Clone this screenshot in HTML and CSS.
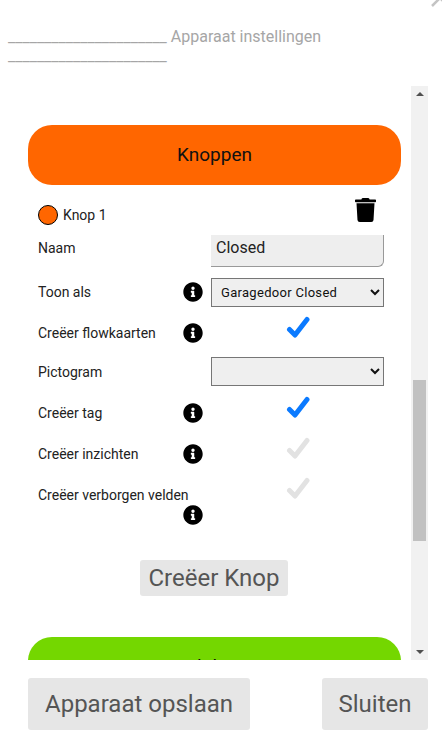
FILE: index.html
```html
<!DOCTYPE html>
<html lang="nl">
<head>
    <meta charset="UTF-8">
    <meta name="viewport" content="width=device-width, initial-scale=1.0">
    <title>Apparaat instellingen</title>
    <link rel="stylesheet" href="styles.css">
</head>
<body>
    <svg class="close-icon" viewBox="0 0 20 20"><path d="M4 16L20 0M4 0L20 16"/></svg>

    <h1 class="page-title">______________________ Apparaat instellingen ______________________</h1>

    <div class="pane">
        <div class="pane-content">
            <div class="section-head orange">Knoppen</div>

            <div class="item-head">
                <span class="dot"></span>
                <span class="item-name">Knop 1</span>
                <svg class="trash" viewBox="0 0 448 512"><path d="M432 32H312l-9.400-18.700A24 24 0 0 0 281.100 0H166.800a23.720 23.720 0 0 0-21.400 13.300L136 32H16A16 16 0 0 0 0 48v24a16 16 0 0 0 16 16h416a16 16 0 0 0 16-16V48a16 16 0 0 0-16-16zM53.200 467a48 48 0 0 0 47.900 45h245.800a48 48 0 0 0 47.900-45L416 112H32z"/></svg>
            </div>

            <div class="row row-name">
                <div class="label-cell"><span>Naam</span></div>
                <input class="text-input" type="text" value="Closed">
            </div>

            <div class="row row-show">
                <div class="label-cell">
                    <span>Toon als</span>
                    <svg class="info" viewBox="0 0 512 512"><use href="#info-shape"/></svg>
                </div>
                <select class="select-input"><option>Garagedoor Closed</option></select>
            </div>

            <div class="row row-flow">
                <div class="label-cell">
                    <span>Creëer flowkaarten</span>
                    <svg class="info" viewBox="0 0 512 512"><use href="#info-shape"/></svg>
                </div>
                <div class="check-cell"><svg class="check on" viewBox="0 0 24 24"><use href="#check-shape"/></svg></div>
            </div>

            <div class="row row-picto">
                <div class="label-cell"><span>Pictogram</span></div>
                <select class="select-input"><option></option></select>
            </div>

            <div class="row row-tag">
                <div class="label-cell">
                    <span>Creëer tag</span>
                    <svg class="info" viewBox="0 0 512 512"><use href="#info-shape"/></svg>
                </div>
                <div class="check-cell"><svg class="check on" viewBox="0 0 24 24"><use href="#check-shape"/></svg></div>
            </div>

            <div class="row row-insights">
                <div class="label-cell">
                    <span>Creëer inzichten</span>
                    <svg class="info" viewBox="0 0 512 512"><use href="#info-shape"/></svg>
                </div>
                <div class="check-cell"><svg class="check" viewBox="0 0 24 24"><use href="#check-shape"/></svg></div>
            </div>

            <div class="row row-hidden">
                <div class="label-cell">
                    <span>Creëer verborgen velden</span>
                    <svg class="info" viewBox="0 0 512 512"><use href="#info-shape"/></svg>
                </div>
                <div class="check-cell"><svg class="check" viewBox="0 0 24 24"><use href="#check-shape"/></svg></div>
            </div>

            <div class="create-wrap"><button class="btn btn-create">Creëer Knop</button></div>

            <div class="section-head green">Sliders</div>
        </div>

        <div class="scrollbar">
            <span class="arrow up"></span>
            <span class="thumb"></span>
            <span class="arrow down"></span>
        </div>
    </div>

    <div class="footer">
        <button class="btn btn-large btn-save">Apparaat opslaan</button>
        <button class="btn btn-large btn-close">Sluiten</button>
    </div>

    <svg class="defs" width="0" height="0">
        <defs>
            <path id="info-shape" d="M256 8C119.043 8 8 119.083 8 256c0 136.997 111.043 248 248 248s248-111.003 248-248C504 119.083 392.957 8 256 8zm0 110c23.196 0 42 18.804 42 42s-18.804 42-42 42-42-18.804-42-42 18.804-42 42-42zm56 254c0 6.627-5.373 12-12 12h-88c-6.627 0-12-5.373-12-12v-24c0-6.627 5.373-12 12-12h12v-64h-12c-6.627 0-12-5.373-12-12v-24c0-6.627 5.373-12 12-12h64c6.627 0 12 5.373 12 12v100h12c6.627 0 12 5.373 12 12v24z"/>
            <path id="check-shape" d="M3.500 13.500L9 19L21 3.500" fill="none" stroke-width="5" stroke-linecap="round" stroke-linejoin="round"/>
        </defs>
    </svg>
</body>
</html>
```

FILE: styles.css
```css
html, body {
    height: 100%;
}
body {
    margin: 0;
    font-family: Roboto, sans-serif;
    background-color: #ffffff;
    color: #222222;
    overflow: hidden;
    position: relative;
}
.defs {
    position: absolute;
}
.close-icon {
    position: absolute;
    top: -10px;
    right: -6px;
    width: 20px;
    height: 20px;
    fill: none;
    stroke: #c4c4c4;
    stroke-width: 2.500;
}
.page-title {
    margin: 0;
    height: 86px;
    padding: 27px 40px 0 8px;
    box-sizing: border-box;
    font-size: 16px;
    font-weight: 400;
    line-height: 19px;
    color: #a6a6a6;
}
.pane {
    display: flex;
    width: 428px;
    height: 574px;
    overflow: hidden;
}
.pane-content {
    width: 373px;
    margin: 0 10px 0 28px;
    padding-top: 39px;
    overflow: hidden;
}
.section-head {
    height: 60px;
    border-radius: 24px;
    font-size: 19px;
    line-height: 60px;
    text-align: center;
    color: #111111;
}
.orange {
    background: #ff6600;
}
.green {
    background: #74d700;
}
.item-head {
    display: flex;
    align-items: center;
    height: 50px;
    padding-left: 10px;
    font-size: 14px;
}
.dot {
    width: 18px;
    height: 18px;
    border: 1px solid #000000;
    border-radius: 50%;
    background: #ff6600;
    margin-top: 9px;
}
.item-name {
    margin-left: 5px;
    margin-top: 9px;
}
.trash {
    width: 21px;
    height: 24px;
    margin-left: auto;
    margin-right: 25px;
    margin-top: -1px;
}
.row {
    display: flex;
    align-items: flex-start;
    padding-left: 10px;
    font-size: 14px;
}
.label-cell {
    display: flex;
    flex-wrap: wrap;
    align-items: center;
    width: 165px;
    margin-right: 8px;
    line-height: 20px;
}
.info {
    width: 20px;
    height: 20px;
    margin-left: auto;
}
.text-input {
    width: 173px;
    height: 32px;
    box-sizing: border-box;
    padding: 0 5px 6px;
    border: 0;
    border-right: 1px solid #999999;
    border-bottom: 1px solid #999999;
    border-bottom-right-radius: 6px;
    background: #eeeeee;
    font-family: Roboto, sans-serif;
    font-size: 16px;
    color: #222222;
}
.select-input {
    width: 173px;
    height: 29px;
    border: 1px solid #767676;
    border-radius: 0;
    background-color: #efefef;
    padding-left: 5px;
    font-family: Roboto, sans-serif;
    font-size: 13px;
    letter-spacing: 0.3px;
    color: #111111;
}
.check-cell {
    width: 173px;
    margin-top: -2px;
    display: flex;
    justify-content: center;
}
.check {
    width: 24px;
    height: 24px;
    stroke: #e2e2e2;
}
.check.on {
    stroke: #0b7aff;
}
.row-name {
    height: 43px;
}
.row-name .label-cell {
    padding-top: 3px;
}
.row-show {
    height: 39px;
}
.row-show .label-cell {
    padding-top: 4px;
}
.row-flow {
    height: 40px;
}
.row-flow .label-cell {
    padding-top: 6px;
}
.row-flow .check-cell {
    margin-top: -1px;
}
.row-picto {
    height: 41px;
}
.row-picto .label-cell, .row-tag .label-cell, .row-insights .label-cell, .row-hidden .label-cell {
    padding-top: 5px;
}
.row-tag {
    height: 41px;
}
.row-insights {
    height: 41px;
}
.row-hidden {
    height: 80px;
}
.row-hidden .check-cell {
    margin-top: -3px;
}
.create-wrap {
    display: flex;
    justify-content: center;
    margin-left: -1px;
    height: 77px;
}
.btn {
    border: 0;
    border-radius: 3px;
    background: #e6e6e6;
    color: #555555;
    font-family: Roboto, sans-serif;
    padding: 0;
}
.btn-create {
    width: 148px;
    height: 36px;
    font-size: 24px;
}
.btn-large {
    height: 52px;
    font-size: 24px;
}
.btn-save {
    width: 222px;
}
.btn-close {
    width: 106px;
}
.scrollbar {
    width: 17px;
    flex: none;
    background: #f1f1f1;
    display: flex;
    flex-direction: column;
    align-items: center;
}
.arrow {
    width: 0;
    height: 0;
    border-left: 4px solid transparent;
    border-right: 4px solid transparent;
}
.arrow.up {
    margin-top: 6px;
    border-bottom: 4px solid #505050;
}
.arrow.down {
    margin-top: auto;
    margin-bottom: 6px;
    border-top: 4px solid #505050;
}
.thumb {
    width: 13px;
    height: 161px;
    margin-top: 284px;
    background: #c1c1c1;
}
.footer {
    display: flex;
    justify-content: space-between;
    width: 400px;
    margin-left: 28px;
    margin-top: 18px;
}
```
